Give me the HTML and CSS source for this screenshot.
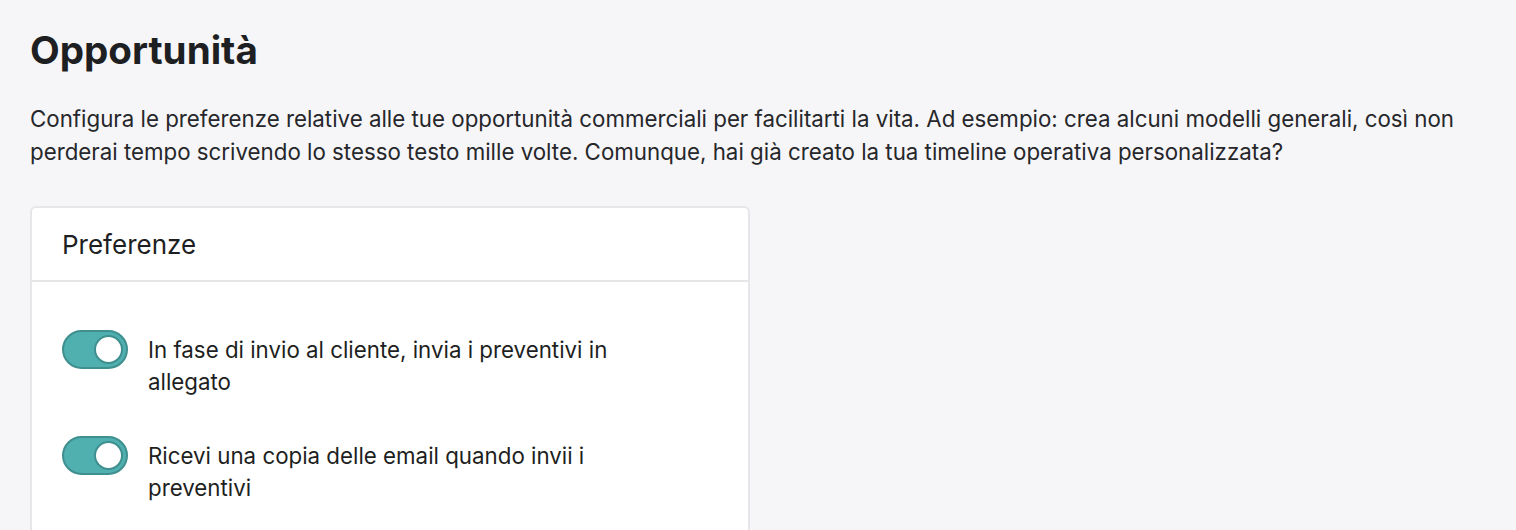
FILE: index.html
```html
<!DOCTYPE html>
<html lang="it">
<head>
    <meta charset="UTF-8">
    <meta name="viewport" content="width=device-width, initial-scale=1.0">
    <title>Opportunità</title>
    <link rel="stylesheet" href="styles.css">
</head>
<body>
    <div class="page">
        <h1 class="page-title">Opportunità</h1>
        <p class="page-intro">Configura le preferenze relative alle tue opportunità commerciali per facilitarti la vita. Ad esempio: crea alcuni modelli generali, così non perderai tempo scrivendo lo stesso testo mille volte. Comunque, hai già creato la tua timeline operativa personalizzata?</p>

        <div class="card">
            <div class="card-header">Preferenze</div>
            <div class="card-body">
                <label class="pref-row">
                    <span class="toggle on"><span class="knob"></span></span>
                    <span class="pref-label">In fase di invio al cliente, invia i preventivi in allegato</span>
                </label>
                <label class="pref-row">
                    <span class="toggle on"><span class="knob"></span></span>
                    <span class="pref-label">Ricevi una copia delle email quando invii i preventivi</span>
                </label>
            </div>
        </div>
    </div>
</body>
</html>
```

FILE: styles.css
```css
body {
    font-family: Inter, 'Noto Sans', sans-serif;
    margin: 0;
    padding: 0;
    background: #f6f6f8;
    color: #1e1f22;
}

.page {
    padding: 24px 30px 0 30px;
}

.page-title {
    margin: 0;
    font-size: 38.6px;
    font-weight: 700;
    line-height: 52px;
}

.page-intro {
    margin: 26px 0 0;
    max-width: 1440px;
    font-size: 22.3px;
    line-height: 33px;
    color: #26272b;
}

.card {
    margin-top: 38px;
    width: 716px;
    background: #fff;
    border: 2px solid #e6e6e9;
    border-radius: 6px;
}

.card-header {
    padding: 0 30px;
    height: 72px;
    display: flex;
    align-items: center;
    font-size: 26px;
    border-bottom: 2px solid #e6e6e9;
}

.card-body {
    padding: 48px 30px 40px;
    display: flex;
    flex-direction: column;
    gap: 38px;
}

.pref-row {
    display: flex;
    align-items: flex-start;
    gap: 20px;
    cursor: pointer;
}

.toggle {
    flex: none;
    position: relative;
    width: 62px;
    height: 35px;
    border: 2px solid #3f8f8f;
    border-radius: 20px;
    background: #50afaf;
}

.toggle .knob {
    position: absolute;
    top: 3px;
    right: 3px;
    width: 25px;
    height: 25px;
    border: 2px solid #3f8f8f;
    border-radius: 50%;
    background: #fff;
}

.pref-label {
    padding-top: 4px;
    max-width: 480px;
    font-size: 22.3px;
    line-height: 32px;
}
```
